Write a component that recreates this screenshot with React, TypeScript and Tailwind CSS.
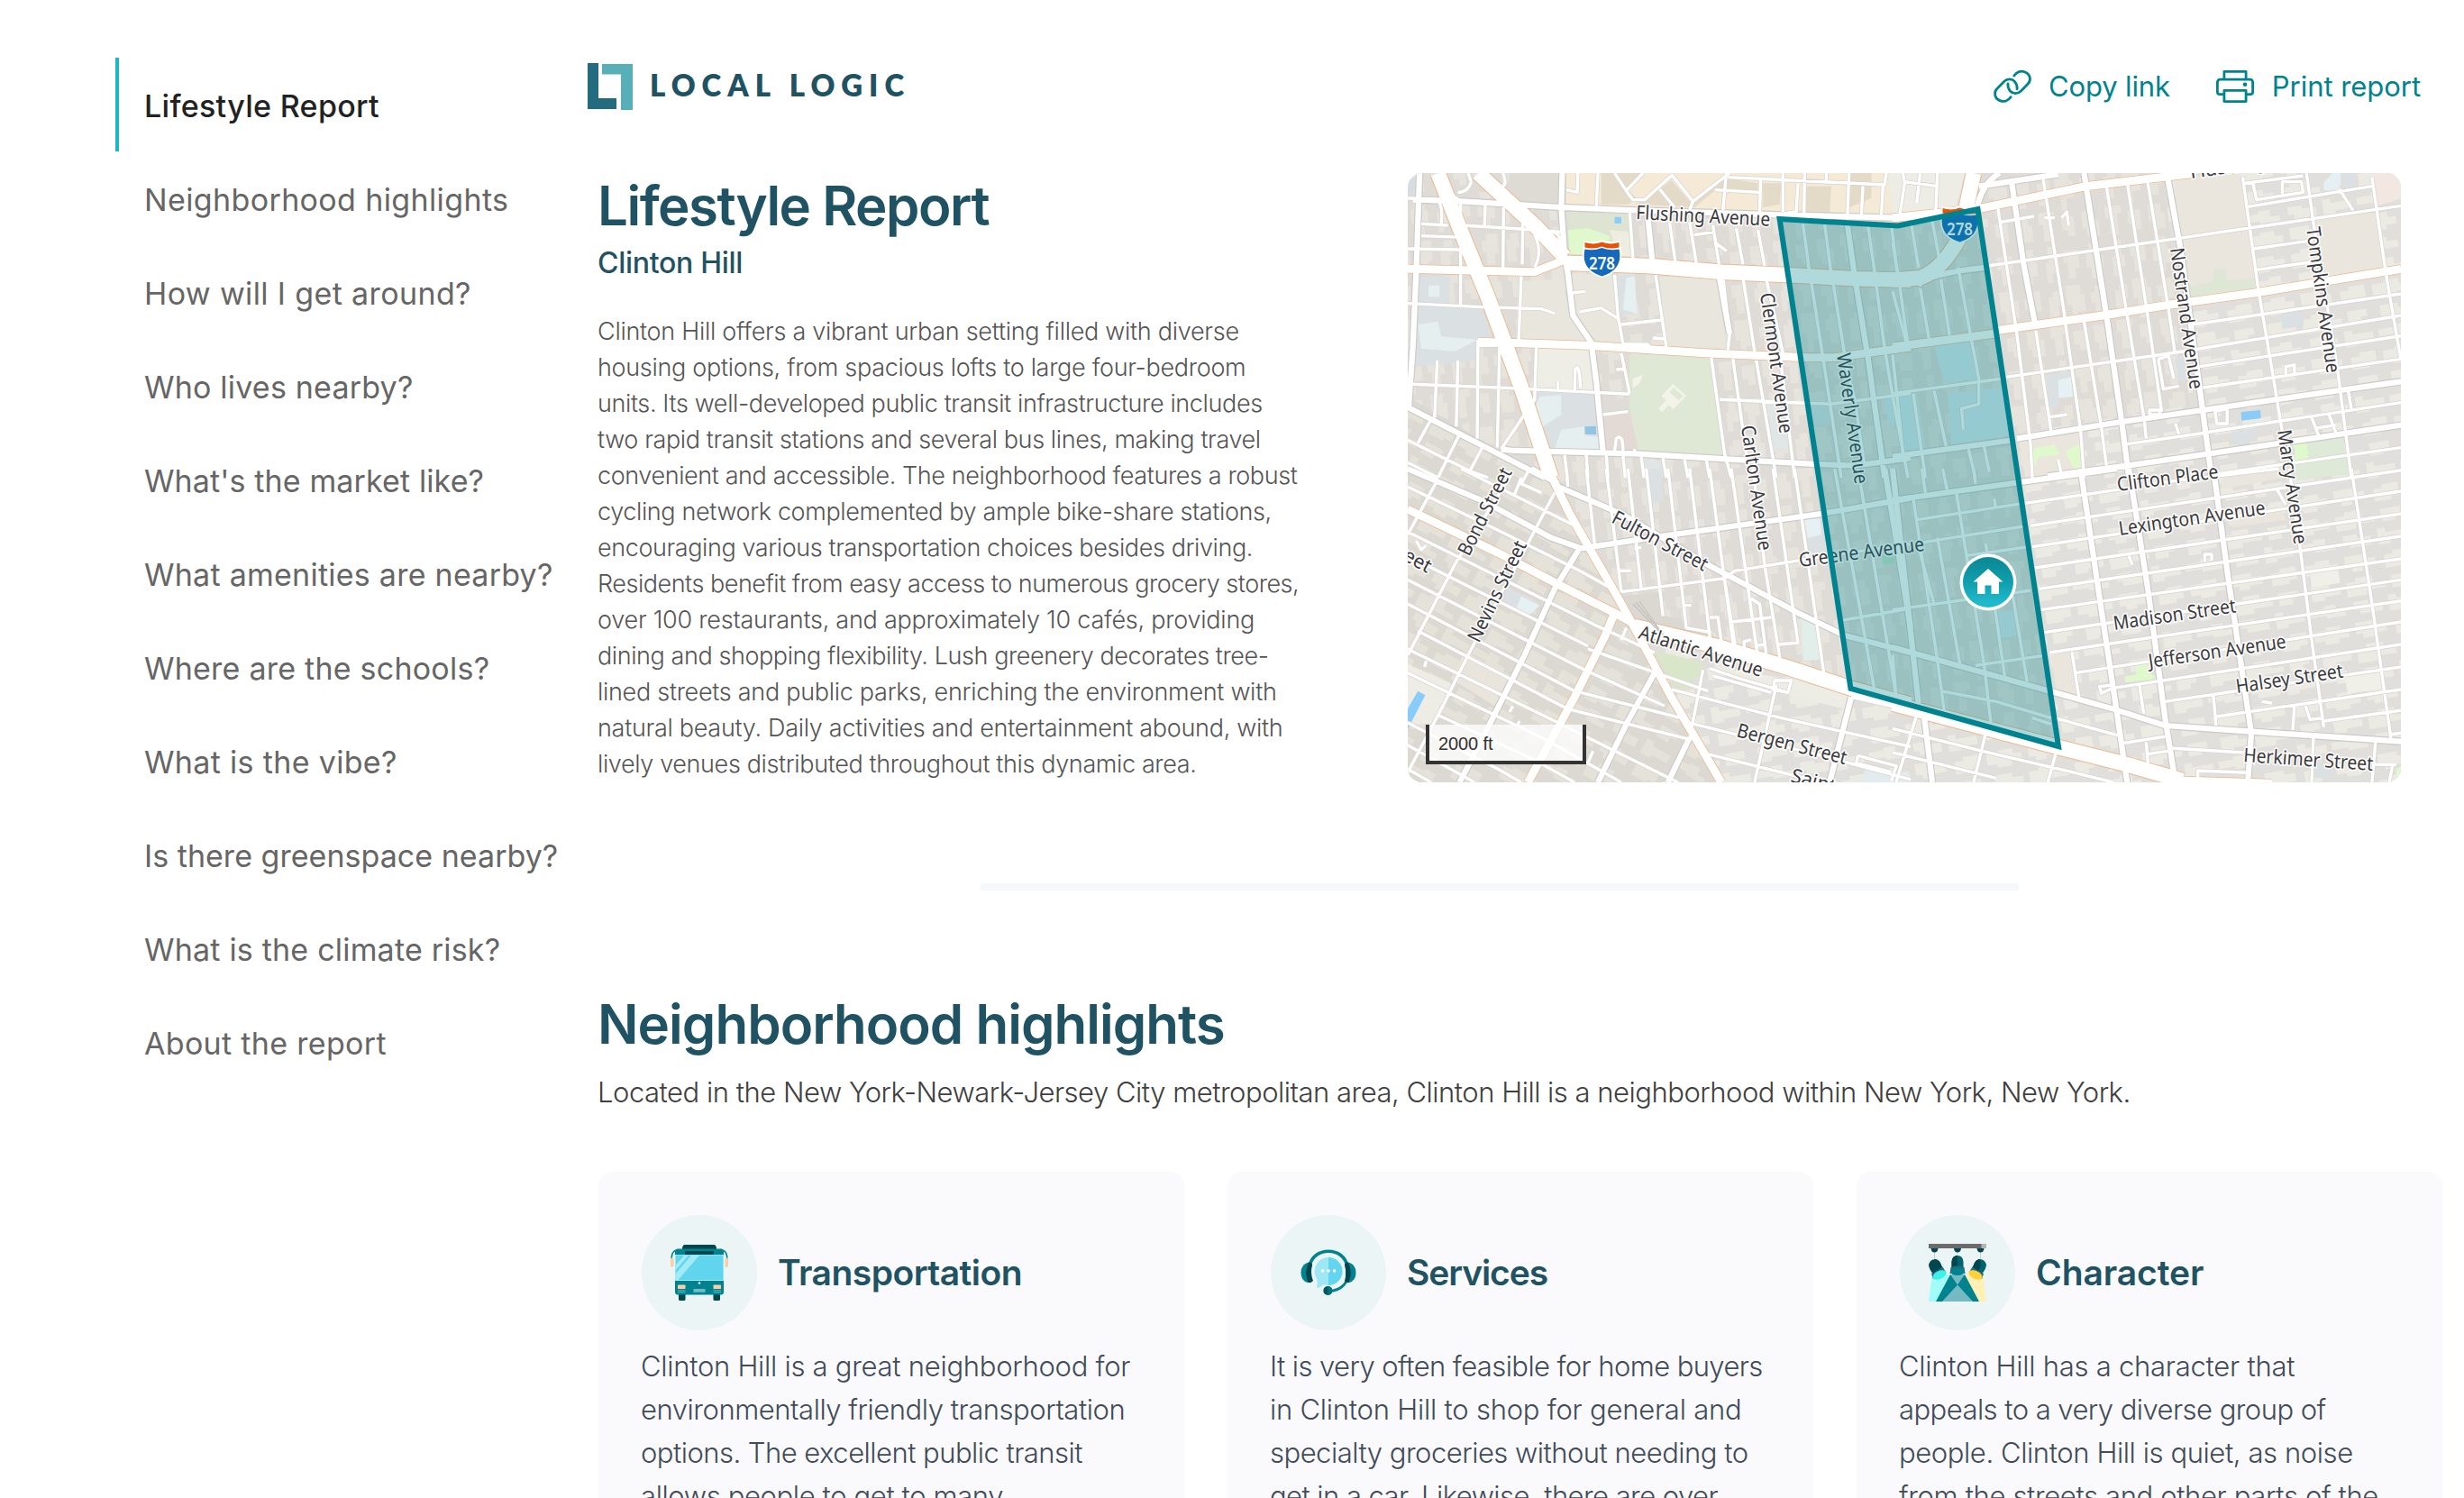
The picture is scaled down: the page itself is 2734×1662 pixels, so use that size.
import clsx from "clsx";

const NAV = [
  { label: "Lifestyle Report", track: "tracking-[0.31px]" },
  { label: "Neighborhood highlights", track: "tracking-[0.37px]" },
  { label: "How will I get around?", track: "tracking-[0.37px]" },
  { label: "Who lives nearby?", track: "tracking-[0.2px]" },
  { label: "What's the market like?", track: "tracking-[0.12px]" },
  { label: "What amenities are nearby?", track: "tracking-[0.25px]" },
  { label: "Where are the schools?", track: "tracking-[0.23px]" },
  { label: "What is the vibe?", track: "tracking-[0.33px]" },
  { label: "Is there greenspace nearby?", track: "tracking-[0.03px]" },
  { label: "What is the climate risk?", track: "tracking-[0.2px]" },
  { label: "About the report", track: "tracking-[0.32px]" },
];

const INTRO = [
  { text: "Clinton Hill offers a vibrant urban setting filled with diverse", track: "tracking-[-0.28px]" },
  { text: "housing options, from spacious lofts to large four-bedroom", track: "tracking-[-0.31px]" },
  { text: "units. Its well-developed public transit infrastructure includes", track: "tracking-[-0.38px]" },
  { text: "two rapid transit stations and several bus lines, making travel", track: "tracking-[-0.39px]" },
  { text: "convenient and accessible. The neighborhood features a robust", track: "tracking-[-0.4px]" },
  { text: "cycling network complemented by ample bike-share stations,", track: "tracking-[-0.38px]" },
  { text: "encouraging various transportation choices besides driving.", track: "tracking-[-0.41px]" },
  { text: "Residents benefit from easy access to numerous grocery stores,", track: "tracking-[-0.48px]" },
  { text: "over 100 restaurants, and approximately 10 cafés, providing", track: "tracking-[-0.24px]" },
  { text: "dining and shopping flexibility. Lush greenery decorates tree-", track: "tracking-[-0.42px]" },
  { text: "lined streets and public parks, enriching the environment with", track: "tracking-[-0.29px]" },
  { text: "natural beauty. Daily activities and entertainment abound, with", track: "tracking-[-0.29px]" },
  { text: "lively venues distributed throughout this dynamic area.", track: "tracking-[-0.37px]" },
];

const CARDS = [
  {
    title: "Transportation",
    titleTrack: "tracking-[-0.54px]",
    Icon: BusIcon,
    lines: [
      { text: "Clinton Hill is a great neighborhood for", track: "tracking-[-0.27px]" },
      { text: "environmentally friendly transportation", track: "tracking-[-0.46px]" },
      { text: "options. The excellent public transit", track: "tracking-[-0.53px]" },
      { text: "allows people to get to many", track: "tracking-[-0.38px]" },
    ],
  },
  {
    title: "Services",
    titleTrack: "tracking-[-1.1px]",
    Icon: HeadsetIcon,
    lines: [
      { text: "It is very often feasible for home buyers", track: "tracking-[-0.6px]" },
      { text: "in Clinton Hill to shop for general and", track: "tracking-[-0.23px]" },
      { text: "specialty groceries without needing to", track: "tracking-[-0.51px]" },
      { text: "get in a car. Likewise, there are over", track: "tracking-[-0.56px]" },
    ],
  },
  {
    title: "Character",
    titleTrack: "tracking-[-0.1px]",
    Icon: SpotlightIcon,
    lines: [
      { text: "Clinton Hill has a character that", track: "tracking-[-0.25px]" },
      { text: "appeals to a very diverse group of", track: "tracking-[-0.55px]" },
      { text: "people. Clinton Hill is quiet, as noise", track: "tracking-[-0.41px]" },
      { text: "from the streets and other parts of the", track: "tracking-[-0.36px]" },
    ],
  },
];

type Area = [fill: string, points: string];

interface Tile {
  transform: string;
  areas: Area[];
  minor: string;
  mid: string;
  major: string;
  highway: string;
}

// Each tile keeps its own local grid, the transform puts it on the map.
const TILES: Tile[] = [
  {
    transform: "matrix(.3699 0 0 .3333 1540 170)",
    areas: [
      ["#f4ead6", "535,66 1500,66 1512,205 1170,205 740,185 535,175"],
      ["#e3dac8", "680,66 760,66 720,120 745,150 720,170 640,170 640,66"],
      ["#e3dac8", "850,90 910,165 1000,80 1110,100 1110,125 980,125 920,180 740,170 780,150"],
      ["#e3dac8", "1125,100 1180,100 1175,170 1125,180"],
      ["#e3dac8", "1255,110 1330,110 1325,200 1255,200"],
      ["#e3dac8", "1390,66 1450,66 1450,150 1385,180"],
      ["#eeede5", "1500,66 1568,66 1568,205 1512,205"],
      ["#dedbd5", "370,66 520,66 518,165 380,160 350,120"],
      ["#dee4d2", "535,195 722,200 724,300 640,300 545,250"],
      ["#eeeee0", "665,255 722,262 730,345 690,340"],
      ["#dff9cc", "540,255 600,250 665,275 660,340 545,335"],
      ["#8cccf8", "680,212 700,212 700,234 680,234"],
      ["#dbe0e2", "88,505 280,512 315,625 270,630 265,690 80,712"],
      ["#e6eff0", "90,570 150,560 160,610 270,620 200,660 100,650"],
      ["#dbe0e2", "90,410 185,410 185,500 88,500"],
      ["#e7f0f1", "122,440 155,440 155,478 122,478"],
      ["#e9e6dd", "400,425 520,420 545,520 565,570 610,630 398,618"],
      ["#e9e6dd", "550,400 675,405 698,630 625,625 560,540"],
      ["#dbe0e2", "680,405 740,405 750,535 700,540"],
      ["#e7f0f1", "715,415 740,410 748,535 705,520"],
      ["#e9e6dd", "815,410 990,415 1015,650 835,645"],
      ["#efeee6", "450,645 610,650 625,790 445,780"],
      ["#dbe0e2", "450,795 630,800 645,990 470,985 440,850"],
      ["#e6eff0", "455,810 520,805 520,870 465,910 470,985 440,850"],
      ["#e6eff0", "520,920 590,910 590,940 640,945 640,990 500,985"],
      ["#92c4e6", "590,910 624,908 625,936 592,936"],
      ["#e3dad5", "645,878 730,865 748,992 655,992"],
      ["#dfe8d5", "725,670 968,678 1003,1008 752,995 725,850"],
      ["#f3f3ea", "735,750 765,738 755,765 735,782"],
      ["#f3f3ea", "855,768 895,808 856,852 842,838 822,862 812,850 835,822 820,808"],
      ["#dfe8d5", "857,780 885,808 872,822 845,795"],
      ["#e0e6e6", "1140,835 1195,840 1200,985 1155,990"],
      ["#e0e6e6", "760,1020 818,1022 825,1080 765,1080"],
      ["#d5dde0", "59,90 90,75 88,125 65,130"],
      ["#d9e3e8", "1265,840 1325,840 1325,900 1280,910"],
      ["#d9eaf0", "1490,820 1568,805 1568,890 1505,910"],
    ],
    minor:
      "M218 165V510M292 170L290 240M347 180L345 400M400 410L392 630M445 645L440 820L340 985M270 630L268 950M210 690L205 910M148 690L140 880M335 640L328 980M405 200L403 370" +
      "M59 318L240 322M100 235L180 240M100 275L230 280M59 500L280 512L460 518L500 533M59 768L370 782L725 802M225 240L440 255L520 262" +
      "M59 955L250 1060L300 1080M59 1030L150 1080M130 885L90 965M215 935L150 1080M285 975L245 1060M330 640H270V625H340" +
      "M725 190L735 350M845 230L862 360M905 230L925 365M975 240L993 370M1045 250L1065 370M1110 255L1130 375M918 272L980 262M985 300L1015 325" +
      "M680 405L690 540L705 635M803 405L835 645M1005 415L1025 600L1020 655M1065 415L1100 660M1135 420L1190 690M1105 690L1165 1080M970 680L1010 1000L1030 1080M1035 685L1085 1080M1178 690L1220 1080" +
      "M700 665L725 800M645 870L720 860M685 720L712 718M575 528L640 515L690 550M550 465L592 460M700 570L820 555M705 635L780 637L790 650M795 615L830 618" +
      "M560 790L562 720Q570 700 575 740L578 780M510 760V790M680 990L685 950Q705 930 705 990M740 985V1000" +
      "M995 820L1250 832L1330 835L1568 800M530 1005L538 1080M595 1005L600 1080M655 1005L660 1080M705 1005L712 1080M760 1010L768 1080M825 1015L835 1080M890 1020L900 1080M955 1020L965 1080" +
      "M1245 235L1265 400M1310 235L1330 405M1440 240L1462 410M1510 240L1530 415M1270 430L1305 680L1360 1080M1335 430L1370 670M1465 440L1490 650L1515 815L1560 1080M1535 440L1560 640M1370 685L1400 820L1430 1040" +
      "M1020 80L1490 105L1495 66M850 70L915 160L1025 66M915 160L905 190M630 66L625 180M570 66L568 130L535 122M680 66L715 125L765 66M715 125L735 155H770L850 75M1015 66L1005 190M1118 90L1115 195M1185 66V195M1250 66L1248 210M1383 66L1378 220M1425 110L1420 210M1485 110L1480 210M980 122L1115 130M1315 66V95M815 120L860 180M1230 100L1225 195L1190 200" +
      "M1290 205L1530 215L1540 200M250 95Q240 130 210 130M250 95L240 66M185 120Q200 160 230 160M345 66Q360 110 340 110M59 150H90M59 375L85 385M75 160H150Q165 170 160 235" +
      "M440 270Q465 330 440 380M470 275Q480 250 510 270Q525 300 505 330",
    mid:
      "M95 66L85 390L75 640L62 850M100 155L220 160L520 180L740 190L1170 205L1530 215M523 66L520 180L530 340L540 400L555 540L610 630L625 760L645 990M375 990L740 1000L1040 1020L1280 1035L1400 1040L1568 1015M780 215L793 360M995 415L1025 600M1378 235L1400 410L1440 680L1490 1080M59 845L470 1080M340 985L375 990",
    major: "M270 628L600 640L950 665L1260 680L1340 680L1568 645M59 385L250 390L440 395L530 355",
    highway: "M150 66L230 290L300 480L400 780L490 1080M270 66L440 240L530 345M530 365L780 375L1000 395L1195 405L1400 418L1568 422",
  },
  {
    transform: "matrix(.3827 0 0 .3333 2100 170)",
    areas: [
      ["#eeede5", "0,66 210,66 180,190 0,215"],
      ["#eae6dd", "815,80 1010,70 1035,240 830,275"],
      ["#eae6dd", "830,290 1035,255 1055,445 860,480"],
      ["#eae6dd", "1225,215 1400,190 1430,380 1240,420"],
      ["#dee7d5", "850,447 925,430 935,385 965,385 970,425 1050,415 1055,448 860,480"],
      ["#f3e8e1", "1395,66 1474,66 1474,150 1405,175"],
      ["#e4f0f3", "1250,100 1275,66 1300,66 1295,118 1250,122"],
      ["#dbe0e2", "1300,66 1340,66 1345,105 1300,110"],
      ["#eae6dd", "365,955 540,925 555,1060 385,1080"],
      ["#dff9cc", "400,985 470,970 485,1003 425,1010 410,1048 395,1045"],
      ["#dff9cc", "500,992 545,965 545,1048 525,1050"],
      ["#dbe0e2", "445,740 515,725 525,812 480,815 478,850 455,850"],
      ["#e6f1f3", "480,755 518,745 522,810 482,815"],
      ["#dbe0e2", "820,680 848,670 855,755 828,760"],
      ["#dbe0e2", "1125,530 1188,522 1192,575 1130,585"],
      ["#dbe0e2", "985,925 1070,912 1040,945 1025,972 990,970"],
      ["#8accf9", "1010,862 1066,855 1068,882 1012,890"],
      ["#dfe9d8", "1175,965 1305,940 1325,1070 1165,1080"],
      ["#dff9cc", "1165,965 1200,960 1206,1020 1168,1025"],
      ["#d9eaf0", "120,640 230,622 250,750 150,765"],
      ["#d9eaf0", "160,800 325,780 340,940 170,970"],
      ["#d9eaf0", "10,820 70,800 95,980 30,990"],
    ],
    minor:
      "M275 375L830 283L1474 175M330 745L840 660L1474 540M870 570L1474 468M890 710L1474 608M900 780L1474 685M905 930L1474 830M925 1070L1474 980M680 968L910 930M1030 178L1390 110M1045 318L1220 290M1055 388L1230 360M1295 120L1335 190" +
      "M435 75L500 550M620 110L680 540M680 95L738 530M738 85L800 520M1015 80L1060 450L1100 720L1130 930M1200 66L1220 230L1290 720L1330 1080M1390 80L1430 400L1474 690" +
      "M305 180L360 600L400 970M415 590L460 930M500 560L545 920L555 1080M555 560L605 910L620 1040M680 540L730 890L735 950M738 530L780 860M800 520L818 660" +
      "M310 230L410 210M440 215H470M490 215L505 195L510 240M1020 100L1190 75M1045 100L1055 155L1190 130L1185 95L1130 95V135M455 878L505 870M820 900L830 935M770 685L800 675L815 750M770 685L785 785L830 775M935 860L970 850V900H940ZM1140 740V710L1165 705V735M1215 880L1235 940M1230 915L1285 905M1265 870L1285 930M1320 785L1330 850M745 855H775V870H745Z" +
      "M55 240L75 380M115 225L140 380M0 300L15 400M0 460L40 630M80 450L105 615M140 420L165 605M190 380L225 600L250 750V835L200 850L205 920M0 670L30 1000M60 800L95 1080M120 790L155 975M0 800L320 750M220 985L240 1080M265 975L280 1060M30 66L35 100L20 210M35 95L130 110M80 66L70 165M130 66L125 190M400 970L405 1080M480 1020L490 1070",
    mid:
      "M345 95L380 370L415 580M555 66L620 540L665 900L685 1080M795 66L835 320L890 780L925 1080M360 950L660 895L900 855L1474 760M450 1075L680 1040L920 1000L1474 905M0 1010L350 955M75 440Q100 400 275 380M250 110L480 70M245 180Q260 100 310 66",
    major: "M0 215L250 185L560 110L880 66M300 590L610 540L800 505L1050 465L1474 385M0 645L300 600",
    highway: "M235 66L212 190L190 290Q140 390 80 415L0 422",
  },
  {
    transform: "matrix(.3699 0 0 .3333 1540 520)",
    areas: [
      ["#dbd8d2", "700,425 820,410 825,490 880,500 900,530 970,545 1000,600 830,545 740,510"],
      ["#dbe0e2", "775,0 820,0 825,110 785,115"],
      ["#e2eeea", "1240,490 1285,520 1296,635 1245,640"],
      ["#dbe0e2", "1250,165 1300,160 1315,285 1265,285"],
      ["#e6f1f3", "1250,170 1295,165 1300,220 1260,230"],
      ["#d9e6c9", "797,605 945,645 942,690 915,700 905,738 850,718"],
      ["#e9e5dc", "230,610 370,690 320,790 190,700"],
      ["#dbe0e2", "360,395 455,450 420,490 345,440"],
      ["#e6f1f3", "400,425 455,455 425,485 385,465"],
      ["#eeede5", "59,650 200,720 130,850 59,850"],
      ["#eeede5", "980,660 1200,700 1380,750 1370,800 1150,740"],
      ["#88ccfa", "90,740 112,754 62,862 59,862 59,800"],
      ["#e2ebee", "1430,1000 1568,1020 1568,1044 1425,1044"],
      ["#bfe5c8", "1480,290 1515,285 1520,315 1485,318"],
    ],
    minor:
      "M59 60L330 205L575 340L690 410M59 210L640 530L800 612M59 290L600 590M59 370L590 670L830 790M59 450L560 740L880 830M90 540L540 800L900 900M59 600L500 840L870 1044M59 680L470 900L700 1044M150 820L440 970L560 1044M59 845L330 1000L400 1044M59 920L260 1044M59 1000L130 1044M220 0L560 190M600 600L960 740" +
      "M500 80L410 270L250 600L160 800L60 1010M400 30L380 85M370 20L205 310L60 620M150 35L59 220M420 10L400 50L460 80" +
      "M595 0L620 250M655 0L700 410M720 0L760 400M775 0L825 490M840 0L895 530L970 545M905 0L970 600M965 0L1040 620M1030 0L1110 630M1155 0L1230 580L1170 585M1220 0L1310 700M1010 370L1045 610M1130 320L1180 660M1095 0L1130 320" +
      "M700 410L870 385L1010 365L1040 340L1320 290L1568 250M1030 510L1150 495M1360 505L1568 465M535 0L540 60" +
      "M690 340H730M740 265L760 262M885 455H910M965 495H990L1000 575L970 580M1085 430L1115 450L1135 620M1070 620L1068 575L1090 570M1100 590L1130 585M700 570L715 530M365 810L375 790M385 860L395 840M110 660L115 640" +
      "M850 735L1180 830L1568 925M900 845L1300 955L1568 1035M940 945L1300 1044M965 665L1060 700L1200 745M975 690L1150 745M1160 705H1210L1200 745L1155 735ZM1410 955L1525 990L1510 1040M1410 955L1405 980L1510 1010M1390 760L1568 805" +
      "M1340 0L1460 740M1410 0L1525 760M945 670L905 900L840 1044M1165 720L1100 1044M600 980L615 940M85 240L100 270L115 255",
    mid:
      "M59 0L290 110L490 230L580 265M510 60L700 150L960 320L1080 390L1230 480L1370 555L1568 612M430 0L510 50M580 265L820 225L1300 150L1568 98M575 265L500 400L410 620L310 840L215 1044M800 680L720 840L630 1044M905 895L840 1044M1390 760L1325 1044M1490 0L1568 530",
    major: "M480 0L545 150L690 430L740 530L850 760L1000 1044M680 480L650 560L560 760L420 1044M59 135L330 280L510 385L680 480L760 530",
    highway: "M740 525L1000 595L1180 655L1400 735L1568 785",
  },
  {
    transform: "matrix(.3827 0 0 .3333 2100 520)",
    areas: [
      ["#dfe9d8", "1165,0 1320,0 1320,15 1170,40"],
      ["#eae6dd", "960,30 1110,0 1130,30 950,70"],
      ["#eae6dd", "970,160 1130,135 1140,170 985,195"],
      ["#dff9cc", "708,650 738,645 742,680 763,690 760,700 675,712 672,692 706,685"],
      ["#eae6dd", "460,620 515,610 535,755 475,740"],
      ["#f0efe8", "1210,345 1290,332 1298,380 1215,395"],
      ["#f0efe8", "1310,690 1420,665 1430,730 1320,750"],
      ["#dbe0e2", "1222,985 1270,985 1270,1030 1222,1030"],
      ["#dff9cc", "1460,1000 1474,990 1474,1030 1460,1020"],
      ["#d9eaf0", "305,480 350,470 360,555 315,565"],
    ],
    minor:
      "M385 115L700 62M750 50L1120 0M400 190L1474 5M405 260L1474 75M412 330L1474 150M425 400L1474 225M430 470L1474 300M440 545L1474 370M455 612L1474 440M530 680L1474 510M640 730L1474 585M790 775L1474 660M940 825L1474 735M1250 840L1474 805" +
      "M1150 0L1180 250L1215 570L1250 860M1330 0L1390 450L1445 900M520 610L540 760M715 715L728 815M930 755L938 855M1165 790L1160 870M1220 895L1215 1044M1400 910L1390 1044M660 915L800 890M735 910L742 1000M740 950L810 938M805 930L1020 945M885 1035V1005L1030 1012M1195 780L1210 835L1250 830M640 730L605 748L600 725L640 720" +
      "M475 940L450 1044M270 880L235 1044M70 820L10 1044M0 865L260 940L520 1010L640 1044M0 945L300 1030M470 830L660 890M1450 985L1440 1044M1390 985H1460M1445 885L1474 880" +
      "M0 470L250 430L400 405M70 170L380 115M90 245L390 190M210 290L395 260M60 100L130 640L150 810M130 230L195 650M185 80L265 650L285 850M270 250L325 690M345 400L390 710M240 655L450 620M140 740L300 775L460 830M70 240L120 450M0 620L10 760M295 100L298 125M405 830L460 850M85 0L95 80M145 0L158 70M235 0L240 50" +
      "M685 290L695 320M905 310V285H925V305M1070 775L1100 780M1115 70L1140 120",
    mid:
      "M0 105L370 45L650 0M0 0L75 780M545 0L600 430L650 810L680 1044M685 0L740 400L790 830L820 1044M930 0L975 380L1040 880L1030 1044M0 595L470 745L640 800L790 855L1040 875L1474 908M90 810L115 1044",
    major: "M830 1038L1100 1048M0 785L100 815",
    highway: "M0 782L490 930L680 985L840 1038",
  },
];

interface StreetLabel {
  name: string;
  x: number;
  y: number;
  angle: number;
  width?: number;
}

const STREETS: StreetLabel[] = [
  { name: "Flushing Avenue", x: 1815, y: 243, angle: 3, width: 149 },
  { name: "Clermont Avenue", x: 1953, y: 326, angle: 82, width: 157 },
  { name: "Carlton Avenue", x: 1932, y: 473, angle: 82, width: 140 },
  { name: "Waverly Avenue", x: 2038, y: 393, angle: 82, width: 146 },
  { name: "Nostrand Avenue", x: 2408, y: 276, angle: 82, width: 158 },
  { name: "Tompkins Avenue", x: 2559, y: 253, angle: 82, width: 163 },
  { name: "Marcy Avenue", x: 2527, y: 478, angle: 81.6, width: 128 },
  { name: "Fulton Street", x: 1787, y: 579, angle: 28, width: 117 },
  { name: "Atlantic Avenue", x: 1817, y: 708, angle: 17.5, width: 143 },
  { name: "Bergen Street", x: 1926, y: 817, angle: 14.5, width: 125 },
  { name: "Saint", x: 1986, y: 867, angle: 15 },
  { name: "Bond Street", x: 1630, y: 618, angle: -63, width: 106 },
  { name: "Nevins Street", x: 1641, y: 714, angle: -64, width: 122 },
  { name: "Street", x: 1531, y: 607, angle: 29 },
  { name: "Greene Avenue", x: 1997, y: 629, angle: -7.5, width: 140 },
  { name: "Clifton Place", x: 2350, y: 545, angle: -7.5, width: 113 },
  { name: "Lexington Avenue", x: 2352, y: 594, angle: -8.3, width: 164 },
  { name: "Madison Street", x: 2346, y: 699, angle: -8.3, width: 137 },
  { name: "Jefferson Avenue", x: 2385, y: 741, angle: -8.3, width: 154 },
  { name: "Halsey Street", x: 2482, y: 769, angle: -8.4, width: 120 },
  { name: "Herkimer Street", x: 2489, y: 845, angle: 4, width: 144 },
  { name: "Flushing Avenue", x: 2431, y: 198, angle: -8 },
];

function Shield({ x, y }: { x: number; y: number }) {
  return (
    <g transform={`translate(${x} ${y})`}>
      <path
        d="M-20 -20Q-10 -17 0 -21Q10 -17 20 -20L21 -12Q26 14 0 21Q-26 14 -21 -12Z"
        fill="#fff"
      />
      <path d="M-19 -18Q-9 -15 0 -18.500Q9 -15 19 -18V-12.500Q9 -10 0 -13.500Q-9 -10 -19 -12.500Z" fill="#e55303" />
      <path d="M-19 -10.500Q-9 -8.500 0 -12Q9 -8.500 19 -10.500Q24 12 0 19.500Q-24 12 -19 -10.500Z" fill="#1469bd" />
      <text
        y="12"
        textAnchor="middle"
        textLength="29"
        lengthAdjust="spacingAndGlyphs"
        className="fill-white font-['Noto_Sans',sans-serif] text-[19px] font-semibold"
      >
        278
      </text>
    </g>
  );
}

function Roads({ layer, stroke, width }: { layer: "minor" | "mid" | "major" | "highway"; stroke: string; width: number }) {
  return (
    <>
      {TILES.map((tile) => (
        <path
          key={tile.transform}
          transform={tile.transform}
          d={tile[layer]}
          stroke={stroke}
          strokeWidth={width}
          vectorEffect="non-scaling-stroke"
          strokeLinejoin="round"
          fill="none"
        />
      ))}
    </>
  );
}

function BlockPattern({ id, angle, base, light }: { id: string; angle: number; base: string; light: string }) {
  return (
    <pattern id={id} width="127" height="74" patternUnits="userSpaceOnUse" patternTransform={`rotate(${angle})`}>
      <rect width="127" height="74" fill={base} />
      <path
        d="M3 6h14v-3h16v6h9v8h-12v5h-16v-4h-11zM50 3h22v5h12v9h-15v4h-12v-5h-7zM94 8h10v-4h18v14h-9v4h-19zM8 30h20v5h12v8h-18v4h-14zM47 32h11v-4h19v9h14v6h-22v5h-22zM98 31h22v8h-7v6h-15zM2 56h17v-3h13v8h10v6h-22v-3h-18zM52 54h16v4h15v10h-25v-5h-6zM91 52h9v5h23v9h-19v4h-13z"
        fill={light}
      />
    </pattern>
  );
}

function NeighborhoodMap() {
  return (
    <div className="relative h-[676px] w-[1102px] shrink-0 overflow-hidden rounded-2xl">
      <svg viewBox="1562 192 1102 676" className="block h-full w-full">
        <defs>
          <BlockPattern id="blocks-north" angle={84} base="#dfdcd7" light="#e7e4dd" />
          <BlockPattern id="blocks-west" angle={29} base="#dcd9d3" light="#e5e2da" />
          <BlockPattern id="blocks-east" angle={-9.5} base="#e0dfdb" light="#ebeae3" />
          <linearGradient id="pin" x1="0" y1="0" x2="0" y2="1">
            <stop offset="0.1" stopColor="#0b8b98" />
            <stop offset="0.5" stopColor="#109fae" />
            <stop offset="0.9" stopColor="#20b9cb" />
          </linearGradient>
        </defs>
        <rect x="1562" y="192" width="1102" height="676" fill="url(#blocks-north)" />
        <polygon points="1562,440 1715,530 1812,700 1910,868 1562,868" fill="url(#blocks-west)" />
        <polygon points="2240,480 2430,450 2400,192 2664,192 2664,868 1910,868 1812,700 2283,828" fill="url(#blocks-east)" />
        {TILES.map((tile) => (
          <g key={tile.transform} transform={tile.transform}>
            {tile.areas.map(([fill, points]) => (
              <polygon key={points} points={points} fill={fill} />
            ))}
          </g>
        ))}

        <Roads layer="minor" stroke="#d6d4d0" width={4.8} />
        <Roads layer="mid" stroke="#cccac7" width={8.5} />
        <Roads layer="major" stroke="#eab98f" width={10.5} />
        <Roads layer="highway" stroke="#eab98f" width={18.5} />
        <Roads layer="minor" stroke="#fff" width={3.4} />
        <Roads layer="mid" stroke="#fff" width={6.2} />
        <Roads layer="major" stroke="#fff" width={9} />
        <Roads layer="highway" stroke="#fff" width={16.5} />

        {/* rail yard */}
        <path d="M1812 670l32 34M1815 668l32 38M1819 667l27 38" stroke="#c4c2bf" strokeWidth="1.2" />

        <g className="fill-[#3a3a3e] font-['Noto_Sans',sans-serif] text-[21.5px]">
          {STREETS.map((s) => (
            <text
              key={`${s.name}-${s.x}`}
              transform={`translate(${s.x} ${s.y}) rotate(${s.angle})`}
              textLength={s.width}
              lengthAdjust="spacingAndGlyphs"
              stroke="#fff"
              strokeOpacity="0.85"
              strokeWidth="3.5"
              strokeLinejoin="round"
              paintOrder="stroke"
            >
              {s.name}
            </text>
          ))}
        </g>
        <Shield x={1777.5} y={287} />
        <Shield x={2174.5} y={249} />

        <polygon
          points="1974.600,243 2106,250.500 2194.500,232 2284,828 2053.500,764"
          fill="#00838f"
          fillOpacity="0.31"
          stroke="#00838f"
          strokeWidth="6"
        />

        <circle cx="2206" cy="646" r="31.500" fill="#fff" />
        <circle cx="2206" cy="646" r="28" fill="url(#pin)" />
        <path d="M2206 631L2222.500 645.500H2218V659H2209.500V649.500H2202.500V659H2194V645.500H2189.500Z" fill="#fff" />
      </svg>
      <div className="absolute bottom-5 left-5 h-11 w-[178px] border-4 border-t-0 border-[#333] bg-white/75 pl-2.5 pt-[7px] font-['Liberation_Sans',sans-serif] text-[20px] leading-7 tracking-[-0.1px] text-[#333]">
        2000 ft
      </div>
    </div>
  );
}

function Logo() {
  return (
    <div className="flex items-center">
      <svg width="50" height="52" viewBox="0 0 50 52">
        <path d="M0 0H12V39H32V51H0Z" fill="#236b7e" />
        <path d="M16 1H50V52H37V12.500H16Z" fill="#57b0b8" />
      </svg>
      <span className="-mt-1 ml-[19px] whitespace-nowrap font-['Lato',sans-serif] text-[33px] font-extrabold leading-none tracking-[7px] text-[#1f5363]">
        LOCAL LOGIC
      </span>
    </div>
  );
}

function LinkIcon() {
  return (
    <svg width="42" height="36" viewBox="0 0 42 36" fill="none" stroke="currentColor" strokeWidth="2.8" strokeLinecap="round" className="overflow-visible">
      <path d="M19.2 29.600C16.500 34 11.500 35.600 7 33.600C1 31 0 24.500 3.800 20.600L11.600 12.600C15.400 8.800 20.600 9.400 23.600 12.600C25.600 15 26.400 17.800 26 20.800" />
      <path d="M22.800 6C25.500 1.600 30.500 0 35 2C41 4.600 42 11.100 38.200 15L30.400 23C26.600 26.800 21.400 26.200 18.400 23C16.400 20.600 15.600 17.800 16 14.800" />
    </svg>
  );
}

function PrintIcon() {
  return (
    <svg width="42" height="36" viewBox="0 0 42 36" fill="none" stroke="currentColor" strokeWidth="2.8" strokeLinejoin="round">
      <path d="M8.900 10V1.400H33.100V10" />
      <path d="M9 26.600H4A2.600 2.600 0 0 1 1.400 24V13.200A3 3 0 0 1 4.400 10.200H37.600A3 3 0 0 1 40.600 13.200V24A2.600 2.600 0 0 1 38 26.600H33" />
      <rect x="8.900" y="22.400" width="24.200" height="12.200" />
      <circle cx="32" cy="15.700" r="2.300" fill="currentColor" stroke="none" />
    </svg>
  );
}

function BusIcon() {
  return (
    <svg width="64" height="64" viewBox="0 0 64 64">
      <rect x="9" y="54" width="7.500" height="9" rx="1.500" fill="#02474f" />
      <rect x="47.500" y="54" width="7.500" height="9" rx="1.500" fill="#02474f" />
      <path d="M16 1H48Q51 1 51 6H13Q13 1 16 1Z" fill="#02474f" />
      <path d="M6 7Q1 9 1.200 17M58 7Q63 9 62.800 17" fill="none" stroke="#00838f" strokeWidth="1.600" />
      <rect x="0" y="15.500" width="3.600" height="10.500" rx="1.800" fill="#f8cfa8" />
      <rect x="60.400" y="15.500" width="3.600" height="10.500" rx="1.800" fill="#f8cfa8" />
      <path d="M8 5.500H56Q59 5.500 59 9V53Q59 56.500 56 56.500H8Q5 56.500 5 53V9Q5 5.500 8 5.500Z" fill="#00838f" />
      <rect x="16" y="8" width="32" height="4" fill="#02474f" />
      <rect x="5" y="12" width="54" height="29" fill="#a0ebf6" />
      <rect x="5.800" y="12.700" width="52.400" height="27.300" fill="#62d5ee" />
      <path d="M15 12.700H20L5.800 29V23.500ZM23 12.700H32L8.500 40H5.800V33Z" fill="#a0ebf6" />
      <circle cx="32" cy="43.500" r="1.300" fill="#e8f5f5" />
      <rect x="8" y="45.500" width="8.500" height="4.500" rx="0.800" fill="#f8cfa8" />
      <rect x="47.500" y="45.500" width="8.500" height="4.500" rx="0.800" fill="#f8cfa8" />
      <path d="M8 51.800H16.500M8 53.800H16.500M47.500 51.800H56M47.500 53.800H56" stroke="#6fbcc3" strokeWidth="0.900" />
      <rect x="25.500" y="50" width="13" height="3.800" fill="#6fbcc3" />
    </svg>
  );
}

function HeadsetIcon() {
  return (
    <svg width="64" height="64" viewBox="0 0 64 64">
      <path d="M11 25C13 14 22 8.200 32 8.200C42 8.200 51 14 53 25" fill="none" stroke="#00838f" strokeWidth="3.600" />
      <path d="M53 38C51.500 46 43 52 34 52.300" fill="none" stroke="#00838f" strokeWidth="3" />
      <path d="M10 20.500H13V43H9Q1.500 41 1.500 32Q1.500 22.500 10 20.500Z" fill="#00838f" />
      <path d="M54 20.500H51V43H55Q62.500 41 62.500 32Q62.500 22.500 54 20.500Z" fill="#00838f" />
      <path d="M10 20.500Q14.500 20.500 14 24Q11.500 32 15 41Q13 43.500 9.500 43Q4.500 32 10 20.500Z" fill="#02474f" />
      <path d="M54 20.500Q49.500 20.500 50 24Q52.500 32 50 41Q51 43.500 54.500 43Q59.500 32 54 20.500Z" fill="#02474f" />
      <path d="M32 15A15.500 15.500 0 0 0 18.500 38Q20.500 42 19 49Q23.500 48.500 26 45Q29 46 32 46Z" fill="#9ee8f5" />
      <path d="M32 15A15.500 15.500 0 0 1 32 46Z" fill="#63d5ee" />
      <circle cx="25.700" cy="30" r="1.800" fill="#fff" />
      <circle cx="32" cy="30" r="1.800" fill="#fff" />
      <circle cx="38.500" cy="30" r="1.800" fill="#fff" />
      <circle cx="31.300" cy="52" r="5" fill="#02565f" />
      <path d="M31.300 47A5 5 0 0 1 31.300 57Z" fill="#02747f" />
    </svg>
  );
}

function SpotlightIcon() {
  return (
    <svg width="64" height="64" viewBox="0 0 64 64">
      <rect width="64" height="5" fill="#6b6b6b" />
      <rect x="58.500" width="5.500" height="5" fill="#b4b4b4" />
      <path d="M6.500 8V18M32 8V18M57.500 8V18" stroke="#c9cfd0" strokeWidth="1" />
      <path d="M2.500 5H10.500Q10 9.500 6.500 9.500Q3 9.500 2.500 5ZM28 5H36Q35.500 9.500 32 9.500Q28.500 9.500 28 5ZM53.500 5H61.500Q61 9.500 57.500 9.500Q54 9.500 53.500 5Z" fill="#02474f" />
      <path d="M3.500 37L21 33L24 40L8 64H0Z" fill="#a2fdf9" />
      <path d="M60.500 37L43 33L40 40L56 64H64Z" fill="#fff0b5" />
      <path d="M24 34L8 64H56L40 34Z" fill="#00838f" />
      <path d="M24 34H40L32 45.500ZM32 45.500L49 64H15Z" fill="#75bac2" />
      <path d="M0 23Q2 16.500 8 17Q12 18 13.500 22L16 28L4.500 33Q0 27 0 23Z" fill="#02474f" />
      <path d="M64 23Q62 16.500 56 17Q52 18 50.500 22L48 28L59.500 33Q64 27 64 23Z" fill="#02646e" />
      <path d="M56 17Q52 18 50.500 22L48 28L55 31Q60 22 56 17Z" fill="#02474f" />
      <path d="M25.500 28V20Q26 13 32 13Q38 13 38.500 20V28Z" fill="#02646e" />
      <path d="M25.500 28V20Q26 13 32 13V28Z" fill="#02474f" />
      <path d="M3 33Q9 30.500 15.500 25.500L19.500 32L5 39Z" fill="#256b80" />
      <path d="M61 33Q55 30.500 48.500 25.500L44.500 32L59 39Z" fill="#256b80" />
      <path d="M24.500 26Q32 23 39.500 26L40.500 33H23.500Z" fill="#256b80" />
      <ellipse cx="12" cy="34.500" rx="8" ry="4.500" transform="rotate(-25 12 34.500)" fill="#3df0ea" />
      <ellipse cx="52" cy="34.500" rx="8" ry="4.500" transform="rotate(25 52 34.500)" fill="#ffd23c" />
      <ellipse cx="32" cy="31" rx="8" ry="4" fill="#00838f" />
    </svg>
  );
}

export default function App() {
  return (
    <div className="flex h-[1662px] w-[2734px] overflow-hidden bg-white font-['Inter',sans-serif]">
      <nav className="w-[652px] shrink-0 pl-32 pt-16">
        {NAV.map((item, i) => (
          <a
            key={item.label}
            className={clsx(
              "flex h-[104px] items-center whitespace-nowrap border-l-4 pl-7 pt-0.5 text-[34px]",
              item.track,
              i === 0 ? "border-[#1fb6c5] font-medium text-[#222]" : "border-transparent text-[#666]",
            )}
          >
            {item.label}
          </a>
        ))}
      </nav>

      <main className="grow">
        <header className="mt-16 flex h-16 items-center justify-between pr-12">
          <Logo />
          <div className="flex items-center text-[31px] text-[#00838f]">
            <button className="flex items-center gap-[19px]">
              <LinkIcon />
              <span className="tracking-[-0.14px]">Copy link</span>
            </button>
            <button className="ml-[51px] flex items-center gap-5">
              <PrintIcon />
              <span className="tracking-[-0.05px]">Print report</span>
            </button>
          </div>
        </header>

        <div className="pl-3 pt-16">
          <section className="flex">
            <div className="w-[898px] shrink-0">
              <h1 className="-ml-px text-[60px] font-semibold leading-[72px] tracking-[-1.5px] text-[#1f5363]">
                Lifestyle Report
              </h1>
              <h2 className="-ml-px mt-2 text-[32px] font-medium leading-10 tracking-[-0.3px] text-[#1f5363]">
                Clinton Hill
              </h2>
              <p className="-ml-px mt-9 text-[27px] font-light leading-10 text-[#555]">
                {INTRO.map((line) => (
                  <span key={line.text} className={clsx("block whitespace-nowrap", line.track)}>
                    {line.text}
                  </span>
                ))}
              </p>
            </div>
            <NeighborhoodMap />
          </section>

          <hr className="ml-[424px] mt-28 h-2 w-[1152px] border-0 bg-[#f6f7f9]" />

          <section className="mt-28">
            <h2 className="-ml-px text-[60px] font-semibold leading-[72px] tracking-[-0.97px] text-[#1f5363]">
              Neighborhood highlights
            </h2>
            <p className="-ml-px mt-4 whitespace-nowrap text-[31px] font-light leading-[48px] tracking-[-0.49px] text-[#404040]">
              Located in the New York-Newark-Jersey City metropolitan area, Clinton Hill is a neighborhood within New
              York, New York.
            </p>

            <div className="mt-16 grid w-[2046px] grid-cols-3 gap-12">
              {CARDS.map(({ title, titleTrack, Icon, lines }) => (
                <article key={title} className="h-[480px] rounded-2xl bg-[#fafafc] p-12">
                  <div className="flex items-center gap-[23px]">
                    <div className="flex h-32 w-32 items-center justify-center rounded-full bg-[#ebf5f5]">
                      <Icon />
                    </div>
                    <h3 className={clsx("text-[39px] font-semibold text-[#1f5363]", titleTrack)}>{title}</h3>
                  </div>
                  <p className="-ml-px mt-4 text-[31px] font-light leading-[48px] text-[#414b59]">
                    {lines.map((line) => (
                      <span key={line.text} className={clsx("block whitespace-nowrap", line.track)}>
                        {line.text}
                      </span>
                    ))}
                  </p>
                </article>
              ))}
            </div>
          </section>
        </div>
      </main>
    </div>
  );
}
